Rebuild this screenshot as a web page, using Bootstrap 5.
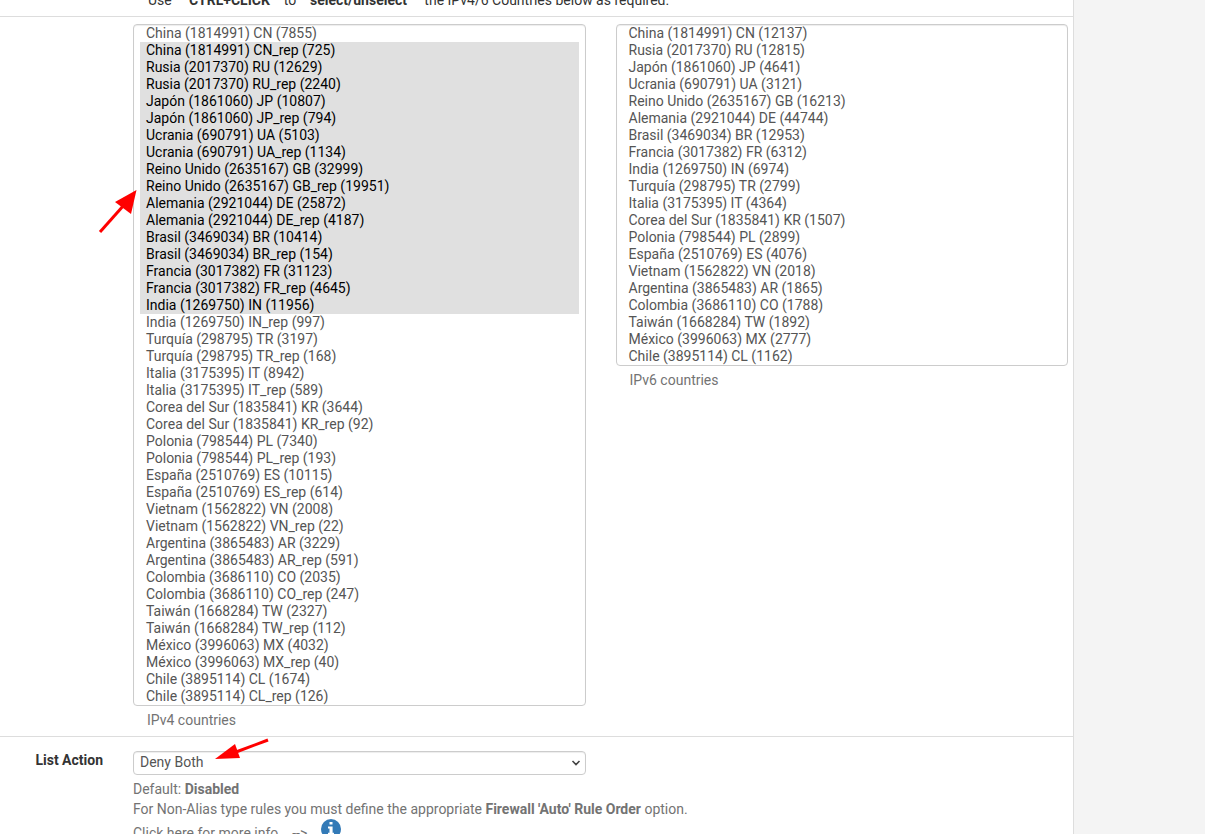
<!DOCTYPE html>
<html lang="en">
<head>
<meta charset="utf-8">
<meta name="viewport" content="width=device-width, initial-scale=1">
<title>GeoIP countries</title>
<link href="https://cdn.jsdelivr.net/npm/bootstrap@5.3.0/dist/css/bootstrap.min.css" rel="stylesheet">
<style>
body { font: 14px/20px Roboto, "Liberation Sans", sans-serif; color: #333; background: #f4f4f4; }
.page { margin-right: 131px; border-right: 1px solid #ddd; }
.band { padding-left: 133px; padding-right: 5px; border-bottom: 1px solid #ddd; }
.intro { margin-top: -10px; padding-bottom: 6px; padding-left: 148px; }
.lists { display: grid; grid-template-columns: 1fr 1fr; column-gap: 30px; align-items: start; padding-top: 7px; padding-bottom: 6px; }
.band select { border: 1px solid #ccc; border-radius: 4px; color: #555; background-color: #fff; font: 14px/16px Roboto, sans-serif; box-shadow: inset 0 1px 1px rgba(0,0,0,.075); }
.countries { padding: 0 6px; overflow: hidden; appearance: none; }
.countries option { padding: 0 6px 1px; min-height: 17px; line-height: 16px; }
.countries option:checked { color: #000; background: #e0e0e0 linear-gradient(#e0e0e0, #e0e0e0); }
.hint { color: #737373; }
.caption { padding: 4px 14px 0; }
.action { display: grid; grid-template-columns: 103px 1fr; column-gap: 30px; padding: 13px 5px 15px 0; }
.action-body { padding-top: 1px; }
.half { width: calc(50% - 15px); }
.action-select { height: 24px; padding: 0 24px 2px 6px; appearance: none; }
.chevron { right: 5px; top: 8px; pointer-events: none; }
.arrow-list { left: 98px; top: 198px; }
.arrow-action { left: 214px; top: 747px; }
.info { margin-left: 14px; }
</style>
<script src="https://cdn.jsdelivr.net/npm/bootstrap@5.3.0/dist/js/bootstrap.bundle.min.js"></script>
</head>
<body class="vh-100 overflow-hidden">
<main class="page bg-white min-vh-100 position-relative">
  <div class="band intro">Use &nbsp;&nbsp;&nbsp;&nbsp;<strong>CTRL+CLICK</strong> &nbsp;&nbsp;&nbsp;to &nbsp;&nbsp;&nbsp;<strong>select/unselect</strong> &nbsp;&nbsp;&nbsp;&nbsp;the IPv4/6 Countries below as required.</div>
  <div class="band lists">
    <div>
      <select id="v4" class="countries d-block w-100" multiple size="40">
        <option>China (1814991) CN (7855)</option>
        <option selected>China (1814991) CN_rep (725)</option>
        <option selected>Rusia (2017370) RU (12629)</option>
        <option selected>Rusia (2017370) RU_rep (2240)</option>
        <option selected>Japón (1861060) JP (10807)</option>
        <option selected>Japón (1861060) JP_rep (794)</option>
        <option selected>Ucrania (690791) UA (5103)</option>
        <option selected>Ucrania (690791) UA_rep (1134)</option>
        <option selected>Reino Unido (2635167) GB (32999)</option>
        <option selected>Reino Unido (2635167) GB_rep (19951)</option>
        <option selected>Alemania (2921044) DE (25872)</option>
        <option selected>Alemania (2921044) DE_rep (4187)</option>
        <option selected>Brasil (3469034) BR (10414)</option>
        <option selected>Brasil (3469034) BR_rep (154)</option>
        <option selected>Francia (3017382) FR (31123)</option>
        <option selected>Francia (3017382) FR_rep (4645)</option>
        <option selected>India (1269750) IN (11956)</option>
        <option>India (1269750) IN_rep (997)</option>
        <option>Turquía (298795) TR (3197)</option>
        <option>Turquía (298795) TR_rep (168)</option>
        <option>Italia (3175395) IT (8942)</option>
        <option>Italia (3175395) IT_rep (589)</option>
        <option>Corea del Sur (1835841) KR (3644)</option>
        <option>Corea del Sur (1835841) KR_rep (92)</option>
        <option>Polonia (798544) PL (7340)</option>
        <option>Polonia (798544) PL_rep (193)</option>
        <option>España (2510769) ES (10115)</option>
        <option>España (2510769) ES_rep (614)</option>
        <option>Vietnam (1562822) VN (2008)</option>
        <option>Vietnam (1562822) VN_rep (22)</option>
        <option>Argentina (3865483) AR (3229)</option>
        <option>Argentina (3865483) AR_rep (591)</option>
        <option>Colombia (3686110) CO (2035)</option>
        <option>Colombia (3686110) CO_rep (247)</option>
        <option>Taiwán (1668284) TW (2327)</option>
        <option>Taiwán (1668284) TW_rep (112)</option>
        <option>México (3996063) MX (4032)</option>
        <option>México (3996063) MX_rep (40)</option>
        <option>Chile (3895114) CL (1674)</option>
        <option>Chile (3895114) CL_rep (126)</option>
      </select>
      <label for="v4" class="hint caption d-block">IPv4 countries</label>
    </div>
    <div>
      <select id="v6" class="countries d-block w-100" multiple size="20">
        <option>China (1814991) CN (12137)</option>
        <option>Rusia (2017370) RU (12815)</option>
        <option>Japón (1861060) JP (4641)</option>
        <option>Ucrania (690791) UA (3121)</option>
        <option>Reino Unido (2635167) GB (16213)</option>
        <option>Alemania (2921044) DE (44744)</option>
        <option>Brasil (3469034) BR (12953)</option>
        <option>Francia (3017382) FR (6312)</option>
        <option>India (1269750) IN (6974)</option>
        <option>Turquía (298795) TR (2799)</option>
        <option>Italia (3175395) IT (4364)</option>
        <option>Corea del Sur (1835841) KR (1507)</option>
        <option>Polonia (798544) PL (2899)</option>
        <option>España (2510769) ES (4076)</option>
        <option>Vietnam (1562822) VN (2018)</option>
        <option>Argentina (3865483) AR (1865)</option>
        <option>Colombia (3686110) CO (1788)</option>
        <option>Taiwán (1668284) TW (1892)</option>
        <option>México (3996063) MX (2777)</option>
        <option>Chile (3895114) CL (1162)</option>
      </select>
      <label for="v6" class="hint caption d-block">IPv6 countries</label>
    </div>
  </div>
  <div class="band action">
    <label for="action" class="fw-bold text-end">List Action</label>
    <div class="action-body">
      <div class="half position-relative">
        <select id="action" class="action-select d-block w-100"><option>Deny Both</option></select>
        <svg class="chevron position-absolute" width="10" height="8" viewBox="0 0 10 8" fill="none" stroke="#444" stroke-width="1.6" aria-hidden="true"><path d="M1.5 2 5 5.5 8.500 2"/></svg>
      </div>
      <div class="hint pt-1">
        <div>Default: <strong>Disabled</strong></div>
        <div>For Non-Alias type rules you must define the appropriate <strong>Firewall 'Auto' Rule Order</strong> option.</div>
        <div class="d-flex align-items-start">
          <span class="pt-1">Click here for more info &nbsp;&nbsp; --&gt;</span>
          <a href="#info" class="info d-block lh-1" aria-label="More info"><svg width="20" height="20" viewBox="0 0 20 20"><circle cx="10" cy="10" r="10" fill="#337ab7"/><path fill="#fff" d="M8.500 3h3v2.600h-3zM7 7.500h4.600v6.300H13V16H7v-2.200h1.500V9.500H7z"/></svg></a>
        </div>
      </div>
    </div>
  </div>
  <svg class="arrow-list position-absolute" width="40" height="46" viewBox="0 0 40 46" aria-hidden="true"><path d="M2 44 26 17" stroke="#f00" stroke-width="3"/><path d="M38.500 2 33 26 17 14z" fill="#f00"/></svg>
  <svg class="arrow-action position-absolute" width="56" height="24" viewBox="0 0 56 24" aria-hidden="true"><path d="M54 3 22 15" stroke="#f00" stroke-width="3"/><path d="M1 22 21 7 26 21z" fill="#f00"/></svg>
</main>
</body>
</html>
